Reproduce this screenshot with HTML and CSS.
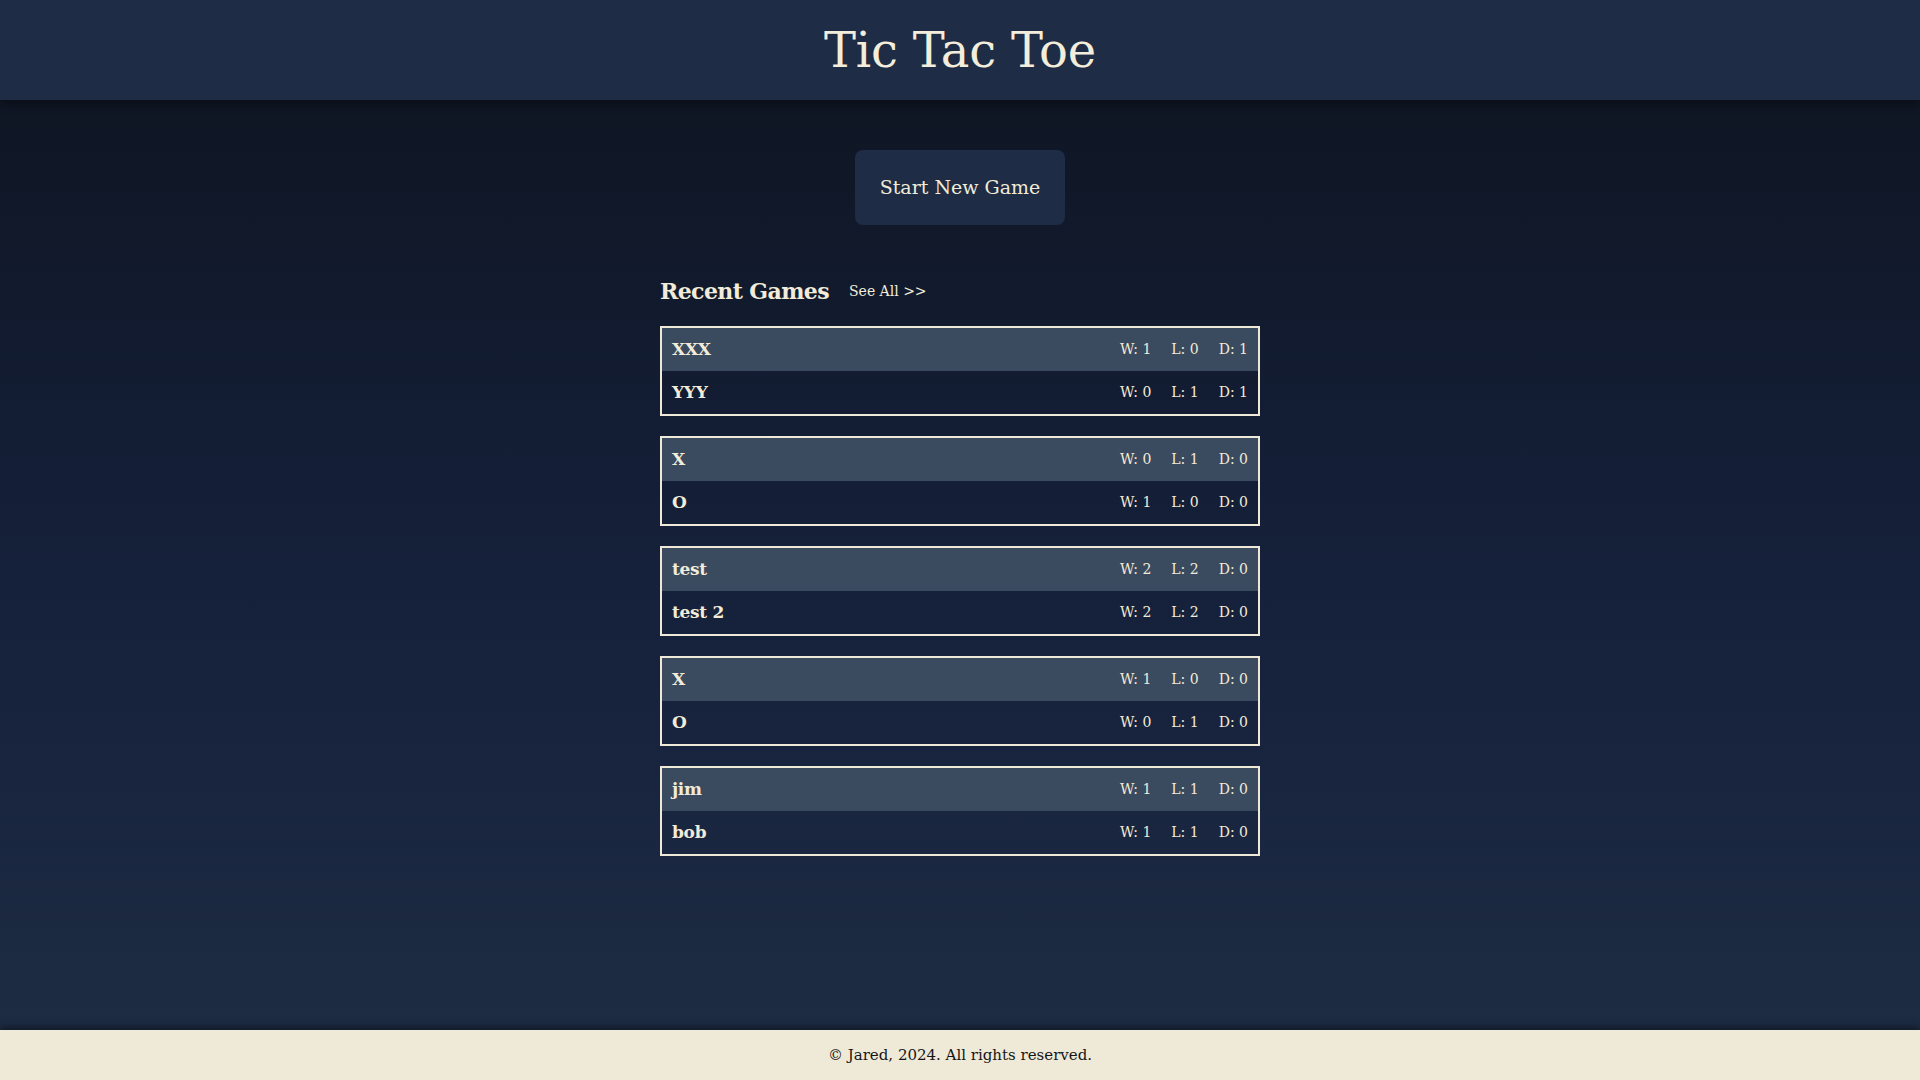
FILE: index.html
```html
<!DOCTYPE html>
<html lang="en">
<head>
<meta charset="utf-8">
<title>Tic Tac Toe</title>
<link rel="stylesheet" href="styles.css">
</head>
<body>
<header class="site-header">
  <h1 class="site-title">Tic Tac Toe</h1>
</header>
<main class="main">
  <button class="new-game">Start New Game</button>
  <section class="recent">
    <div class="recent-head">
      <h2 class="recent-title">Recent Games</h2>
      <a class="see-all" href="#">See All &gt;&gt;</a>
    </div>
    <div class="games">
      <div class="game">
        <div class="row row-top"><span class="name">XXX</span><span class="stats"><span>W: 1</span><span>L: 0</span><span>D: 1</span></span></div>
        <div class="row"><span class="name">YYY</span><span class="stats"><span>W: 0</span><span>L: 1</span><span>D: 1</span></span></div>
      </div>
      <div class="game">
        <div class="row row-top"><span class="name">X</span><span class="stats"><span>W: 0</span><span>L: 1</span><span>D: 0</span></span></div>
        <div class="row"><span class="name">O</span><span class="stats"><span>W: 1</span><span>L: 0</span><span>D: 0</span></span></div>
      </div>
      <div class="game">
        <div class="row row-top"><span class="name">test</span><span class="stats"><span>W: 2</span><span>L: 2</span><span>D: 0</span></span></div>
        <div class="row"><span class="name">test 2</span><span class="stats"><span>W: 2</span><span>L: 2</span><span>D: 0</span></span></div>
      </div>
      <div class="game">
        <div class="row row-top"><span class="name">X</span><span class="stats"><span>W: 1</span><span>L: 0</span><span>D: 0</span></span></div>
        <div class="row"><span class="name">O</span><span class="stats"><span>W: 0</span><span>L: 1</span><span>D: 0</span></span></div>
      </div>
      <div class="game">
        <div class="row row-top"><span class="name">jim</span><span class="stats"><span>W: 1</span><span>L: 1</span><span>D: 0</span></span></div>
        <div class="row"><span class="name">bob</span><span class="stats"><span>W: 1</span><span>L: 1</span><span>D: 0</span></span></div>
      </div>
    </div>
  </section>
</main>
<footer class="site-footer">© Jared, 2024. All rights reserved.</footer>
</body>
</html>
```
FILE: styles.css
```css
* { box-sizing: border-box; }
html, body { margin: 0; padding: 0; }
body {
  min-height: 100vh;
  display: flex;
  flex-direction: column;
  font-family: "DejaVu Serif", "Liberation Serif", serif;
  color: #f2ebd9;
  background: #111827;
}
.site-header {
  height: 100px;
  background: #1e2d45;
  display: flex;
  align-items: center;
  justify-content: center;
  box-shadow: 0 3px 10px rgba(0, 0, 0, 0.45);
  position: relative;
  z-index: 1;
}
.site-title {
  margin: 0;
  font-weight: 400;
  font-size: 48px;
  line-height: 1;
  color: #f4eddc;
  letter-spacing: -0.2px;
}
.main {
  flex: 1;
  display: flex;
  flex-direction: column;
  align-items: center;
  padding-top: 50px;
  background: linear-gradient(to bottom, #0f1624 0%, #15203a 50%, #1d2b43 100%);
}
.new-game {
  font-family: inherit;
  font-size: 19px;
  line-height: 27px;
  padding: 24px 25px;
  border: none;
  border-radius: 8px;
  background: #1e2d45;
  color: #f2ebd9;
}
.recent {
  width: 600px;
  margin-top: 51px;
}
.recent-head {
  display: flex;
  align-items: center;
  gap: 20px;
  height: 30px;
  margin-bottom: 20px;
}
.recent-title {
  margin: 0;
  font-size: 22px;
  line-height: 30px;
  font-weight: 700;
  letter-spacing: -0.6px;
}
.see-all {
  font-size: 14px;
  line-height: 16px;
  color: #f2ebd9;
  text-decoration: none;
}
.games {
  display: flex;
  flex-direction: column;
  gap: 20px;
}
.game {
  border: 2px solid #efe9d8;
}
.row {
  height: 43px;
  display: flex;
  align-items: center;
  justify-content: space-between;
  padding: 0 10px;
}
.row-top { background: #3a4a5f; }
.name {
  font-weight: 700;
  font-size: 17px;
  line-height: 43px;
  letter-spacing: -0.3px;
}
.stats {
  display: flex;
  gap: 20px;
  font-size: 14px;
  line-height: 43px;
}
.site-footer {
  height: 50px;
  background: #efe9d8;
  color: #161616;
  font-size: 15px;
  line-height: 50px;
  text-align: center;
  box-shadow: 0 -3px 8px rgba(0, 0, 0, 0.45);
  position: relative;
}
```
